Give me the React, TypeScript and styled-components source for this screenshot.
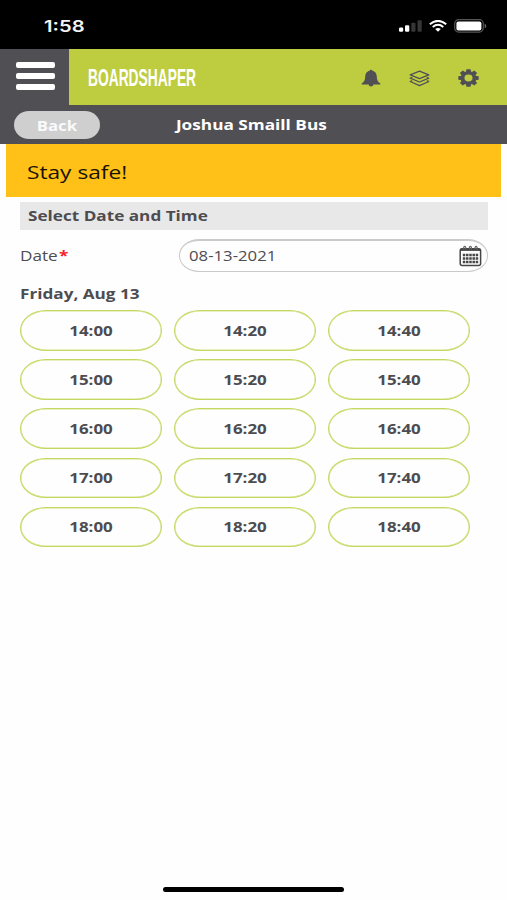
import React from 'react';
import styled, { createGlobalStyle } from 'styled-components';

const Global = createGlobalStyle`
  * { box-sizing: border-box; }
  body { margin: 0; background: #fff; }
  button, input { font: inherit; color: inherit; }
`;

const Screen = styled.main`
  width: 507px;
  height: 900px;
  display: flex;
  flex-direction: column;
  overflow: hidden;
  background: #fefefe;
  color: #4d4c50;
  font-family: 'Open Sans', sans-serif;
  font-size: 14px;
`;

const Wide = styled.span<{ $scale?: number; $origin?: string }>`
  display: inline-block;
  white-space: nowrap;
  transform: scaleX(${(p) => p.$scale ?? 1.225});
  transform-origin: ${(p) => p.$origin ?? 'left'} center;
`;

const StatusBar = styled.header`
  height: 49px;
  flex: none;
  display: flex;
  align-items: center;
  justify-content: space-between;
  padding: 2px 20px 0 44px;
  background: #000;
  color: #f4f4f4;
`;

const Clock = styled.time`
  padding-top: 1px;
  font: 600 16px/20px Inter, sans-serif;
`;

const StatusIcons = styled.div`
  display: flex;
  align-items: center;
  gap: 7px;
`;

const Icon = styled.svg`
  display: block;
  flex: none;
`;

const Header = styled.div`
  height: 56px;
  flex: none;
  display: flex;
  background: #becd40;
`;

const MenuButton = styled.button`
  width: 69px;
  height: 56px;
  padding: 1px 0 3px 16px;
  border: 0;
  display: flex;
  flex-direction: column;
  justify-content: center;
  gap: 4.6px;
  background: #504f54;
`;

const MenuLine = styled.span`
  width: 39px;
  height: 6.1px;
  border-radius: 2px;
  background: #fff;
`;

const Brand = styled.div`
  flex: 1;
  padding: 14px 0 0 19px;
  font: bold 24.5px/30px 'Liberation Sans', sans-serif;
  color: #fff;
`;

const HeaderIcons = styled.nav`
  display: flex;
  align-items: center;
  gap: 28px;
  padding: 2px 28px 0 0;
  color: #504f54;
`;

const TitleBar = styled.div`
  height: 39px;
  flex: none;
  display: grid;
  grid-template-columns: 86px 1fr 86px;
  align-items: center;
  padding: 0 19px 0 14px;
  background: #504f54;
  color: #fff;
  font-weight: 700;
`;

const BackButton = styled.button`
  height: 28px;
  padding: 2px 0 0;
  border: 0;
  border-radius: 15px / 14px;
  background: #cfcfcf;
  color: #fafafa;
  line-height: 26px;
`;

const Title = styled.h1`
  margin: 0;
  font-size: 14px;
  line-height: 20px;
  text-align: center;
`;

const Banner = styled.div`
  height: 53px;
  flex: none;
  margin: 0 6px;
  padding: 0 21px;
  background: #ffc018;
  color: #171300;
  font-size: 18px;
  line-height: 56px;
`;

const Content = styled.section`
  padding: 5px 19px 0 20px;
`;

const SectionTitle = styled.h2`
  margin: 0;
  height: 28px;
  padding-left: 8px;
  background: #e8e8e8;
  font-size: 14px;
  line-height: 28px;
`;

const Field = styled.label`
  margin-top: 9px;
  height: 33px;
  display: grid;
  grid-template-columns: 159px 1fr;
  line-height: 33px;
`;

const Required = styled.b`
  margin-left: 1px;
  color: #f5222d;
`;

const DateBox = styled.span`
  display: flex;
  align-items: center;
  justify-content: space-between;
  padding: 0 5px 0 9px;
  border: 1px solid #c9c9c9;
  border-top: 2px solid #cbcbcb;
  border-radius: 20px / 16px;
  line-height: 28px;
`;

const DayTitle = styled.h3`
  margin: 12px 0 6px;
  font-size: 14px;
  line-height: 20px;
`;

const Slots = styled.div`
  display: grid;
  grid-template-columns: repeat(3, 142px);
  grid-auto-rows: 40.6px;
  gap: 8.6px 12px;
`;

const Slot = styled.button`
  padding: 0.6px 0 0;
  border: 1px solid #c4d75f;
  border-radius: 26px / 20.3px;
  background: #fefefe;
  box-shadow: inset 0 0 0 0.5px #d2e184;
  font-weight: 700;
  line-height: 20px;
`;

const HomeIndicator = styled.div`
  width: 181px;
  height: 5px;
  margin: auto auto 8px 163px;
  border-radius: 3px;
  background: #000;
`;

const hours = [14, 15, 16, 17, 18];
const minutes = ['00', '20', '40'];

const teeth = [0, 45, 90, 135, 180, 225, 270, 315];

export default function App() {
  return (
    <Screen>
      <Global />
      <StatusBar>
        <Clock><Wide $scale={1.26}>1:58</Wide></Clock>
        <StatusIcons>
          <Icon width="23" height="12" viewBox="0 0 23 12" fill="#fff">
            <rect x="0" y="7.5" width="4.2" height="4.3" rx="1.2" />
            <rect x="6" y="5.2" width="4.3" height="6.6" rx="1.2" />
            <rect x="12.3" y="2.8" width="4.2" height="9" rx="1" fill="#363636" />
            <rect x="18.5" y="0.2" width="4.2" height="11.6" rx="1" fill="#363636" />
          </Icon>
          <Icon width="18" height="12" viewBox="0 0 18 12" fill="none" stroke="#fff">
            <path d="M.8 4.3Q9-2.6 17.2 4.3" strokeWidth="2" />
            <path d="M3.7 7Q9 2.6 14.3 7" strokeWidth="1.9" />
            <path d="M6.2 9 9 11.8 11.8 9Q9 7 6.2 9Z" fill="#fff" stroke="none" />
          </Icon>
          <Icon width="33" height="14" viewBox="0 0 33 14">
            <rect x=".7" y=".7" width="28.6" height="12.4" rx="4" fill="#000" stroke="#555" strokeWidth="1.2" />
            <rect x="2.4" y="2.4" width="25" height="9" rx="2" fill="#fff" />
            <path d="M30.7 4.7Q32.3 5.3 32.3 7T30.7 9.2Z" fill="#666" />
          </Icon>
        </StatusIcons>
      </StatusBar>
      <Header>
        <MenuButton aria-label="Menu">
          <MenuLine /><MenuLine /><MenuLine />
        </MenuButton>
        <Brand><Wide $scale={0.563}>BOARDSHAPER</Wide></Brand>
        <HeaderIcons>
          <Icon width="20" height="18" viewBox="0 0 20 18" fill="currentColor">
            <path d="M8.7 1.8C8.7.3 11.3.3 11.3 1.8C14.8 2.6 15.6 5 15.8 8C16 11.4 17 12.9 19.3 14.6V15.4H.7V14.6C3 12.9 4 11.4 4.2 8C4.4 5 5.2 2.6 8.7 1.8ZM7.5 15.2H12.5Q12.2 17.4 10 17.4T7.5 15.2Z" />
          </Icon>
          <Icon width="21" height="17" viewBox="0 0 21 17" fill="none" stroke="currentColor" strokeWidth="1.25" strokeLinejoin="round">
            <path d="M10.5 1.1 19.8 4.9 10.5 8.7 1.2 4.9Z" />
            <path d="M3.2 7.3 1.2 8.2 10.5 12 19.8 8.2 17.8 7.3" />
            <path d="M3.2 10.6 1.2 11.5 10.5 15.6 19.8 11.5 17.8 10.6" />
          </Icon>
          <Icon width="21" height="18" viewBox="-10.5 -10.5 21 21" preserveAspectRatio="none" fill="currentColor">
            {teeth.map((a) => (
              <path key={a} transform={`rotate(${a})`} d="M-2.6-6-2.1-10.2H2.1L2.6-6Z" />
            ))}
            <circle r="6" fill="none" stroke="currentColor" strokeWidth="3.9" />
          </Icon>
        </HeaderIcons>
      </Header>
      <TitleBar>
        <BackButton><Wide $scale={1.2} $origin="center">Back</Wide></BackButton>
        <Title><Wide $scale={1.23} $origin="center">Joshua Smaill Bus</Wide></Title>
      </TitleBar>
      <Banner><Wide $scale={1.26}>Stay safe!</Wide></Banner>
      <Content>
        <SectionTitle><Wide>Select Date and Time</Wide></SectionTitle>
        <Field>
          <span><Wide>Date<Required>*</Required></Wide></span>
          <DateBox>
            <Wide $scale={1.195}>08-13-2021</Wide>
            <Icon width="23" height="22" viewBox="0 0 23 22" fill="none" stroke="#454545">
              <rect x="1.2" y="3.7" width="20.4" height="16.8" rx="2" strokeWidth="1.5" />
              <path d="M1.5 4.8H21.3" strokeWidth="2.2" />
              <path d="M4.7 4.5V2.2Q5.7.5 6.7 2.2V4.5M10.4 4.5V2.2Q11.4.5 12.4 2.2V4.5M16.1 4.5V2.2Q17.1.5 18.1 2.2V4.5" stroke="#666" strokeWidth="1.2" />
              <path d="M3.8 10H19.2M3.8 13.5H19.2M3.8 17H19.2" strokeWidth="2.4" strokeDasharray="2.5 .72" />
            </Icon>
          </DateBox>
        </Field>
        <DayTitle><Wide>Friday, Aug 13</Wide></DayTitle>
        <Slots>
          {hours.flatMap((h) =>
            minutes.map((m) => (
              <Slot key={`${h}${m}`}><Wide $scale={1.21} $origin="center">{`${h}:${m}`}</Wide></Slot>
            ))
          )}
        </Slots>
      </Content>
      <HomeIndicator />
    </Screen>
  );
}
